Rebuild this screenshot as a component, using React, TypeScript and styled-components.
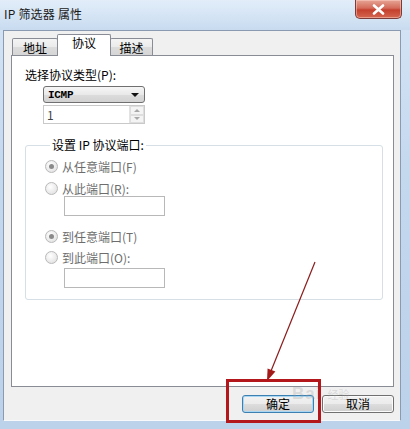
import React from "react";
import styled, { createGlobalStyle, css } from "styled-components";

const GlobalStyle = createGlobalStyle`
  html, body { margin: 0; padding: 0; background: #ffffff; }
  * { box-sizing: border-box; }
`;

const FONT = `"Noto Sans CJK SC", "Liberation Sans", sans-serif`;

const Window = styled.div`
  position: relative;
  width: 410px;
  height: 429px;
  display: flex;
  flex-direction: column;
  overflow: hidden;
  background: linear-gradient(to bottom, #d6e5f6 0%, #c4d8ee 40%, #bcd2ea 100%);
  font-family: ${FONT};
  font-size: 12px;
  color: #000;
`;

const TitleBar = styled.div`
  height: 30px;
  flex: none;
  display: flex;
  justify-content: space-between;
  align-items: flex-start;
  padding-left: 4px;
  padding-right: 8px;
  background: linear-gradient(to bottom, #e2edf9 0%, #d3e3f4 60%, #c8dbef 100%);
`;

const Title = styled.span`
  line-height: 28px;
  font-size: 12px;
  color: #1a1a1a;
  letter-spacing: 0.2px;
`;

const CloseBtn = styled.div`
  width: 47px;
  height: 19px;
  border: 1px solid #7c3b3b;
  border-top: none;
  border-radius: 0 0 5px 5px;
  background: linear-gradient(to bottom, #e6a596 0%, #d46b5a 45%, #c4402f 55%, #d4664f 100%);
  display: flex;
  align-items: center;
  justify-content: center;
  box-shadow: inset 0 0 0 1px rgba(255, 210, 200, 0.5);
`;

const Frame = styled.div`
  flex: 1;
  display: flex;
  padding: 0 9px 8px 3px;
`;

const Client = styled.div`
  flex: 1;
  display: flex;
  flex-direction: column;
  background: #f0f0f0;
  border: 1px solid #8a9bb1;
  border-bottom-color: #f7f9fb;
  padding: 3px 6px 7px 7px;
`;

const TabRow = styled.div`
  height: 21px;
  display: flex;
  align-items: flex-end;
  padding-left: 1px;
  position: relative;
  z-index: 1;
`;

const Tab = styled.div<{ $w: number; $active?: boolean }>`
  width: ${(p) => p.$w}px;
  height: 17px;
  border: 1px solid #898c95;
  border-bottom: none;
  border-radius: 2px 2px 0 0;
  background: linear-gradient(to bottom, #f4f4f4 0%, #ebebeb 50%, #dcdcdc 51%, #d6d6d6 100%);
  display: flex;
  align-items: center;
  justify-content: center;
  font-size: 12px;
  line-height: 14px;
  padding-top: 1px;
  ${(p) =>
    p.$active &&
    css`
      height: 22px;
      margin: 0 -1px -1px -1px;
      background: #ffffff;
      padding-top: 0;
      padding-bottom: 5px;
      position: relative;
    `}
`;

const Panel = styled.div`
  height: 332px;
  flex: none;
  background: #ffffff;
  border: 1px solid #898c95;
  padding: 12px 10px 0 13px;
  display: flex;
  flex-direction: column;
`;

const Label = styled.div`
  line-height: 14px;
  height: 14px;
  font-size: 12px;
  white-space: nowrap;
`;

const Indented = styled.div`
  margin-left: 18px;
  display: flex;
  flex-direction: column;
  align-items: flex-start;
`;

const Select = styled.div`
  margin-top: 4px;
  width: 102px;
  height: 17px;
  border: 1px solid #707070;
  border-radius: 3px;
  background: linear-gradient(to bottom, #f6f6f6 0%, #e9e9e9 50%, #dcdcdc 51%, #d2d2d2 100%);
  display: flex;
  align-items: center;
  justify-content: space-between;
  padding: 0 4px 0 4px;
  font-family: "Liberation Mono", ${FONT};
  font-size: 11px;
  font-weight: bold;
  letter-spacing: -0.3px;
`;

const Caret = styled.span`
  width: 0;
  height: 0;
  border-left: 4px solid transparent;
  border-right: 4px solid transparent;
  border-top: 4px solid #111;
  margin-right: 1px;
`;

const Spin = styled.div`
  margin-top: 2px;
  width: 102px;
  height: 19px;
  border: 1px solid #c9c9c9;
  background: #fff;
  display: flex;
  align-items: stretch;
`;

const SpinText = styled.div`
  flex: 1;
  padding-left: 3px;
  line-height: 17px;
  font-size: 12px;
  color: #444;
`;

const SpinButtons = styled.div`
  width: 15px;
  display: flex;
  flex-direction: column;
  border-left: 1px solid #e2e2e2;
`;

const SpinBtn = styled.div<{ $down?: boolean }>`
  flex: 1;
  display: flex;
  align-items: center;
  justify-content: center;
  background: #f4f4f4;
  border: 1px solid #dedede;
  &::after {
    content: "";
    border-left: 3px solid transparent;
    border-right: 3px solid transparent;
    ${(p) =>
      p.$down
        ? css`border-top: 3px solid #a8a8a8;`
        : css`border-bottom: 3px solid #a8a8a8;`}
  }
`;

const Group = styled.fieldset`
  margin: 14px 0 0 0;
  border: 1px solid #d5dfe5;
  border-radius: 3px;
  box-shadow: inset 1px 1px 0 #ffffff;
  padding: 7px 10px 11px 19px;
  display: flex;
  flex-direction: column;
  align-items: flex-start;
`;

const Legend = styled.legend`
  margin-left: 5px;
  padding: 0 2px;
  line-height: 14px;
  font-size: 12px;
`;

const RadioRow = styled.div<{ $gap: number }>`
  margin-top: ${(p) => p.$gap}px;
  height: 12px;
  display: flex;
  align-items: center;
  gap: 4px;
  color: #6d6d6d;
  font-size: 12px;
  white-space: nowrap;
`;

const Radio = styled.span<{ $checked?: boolean }>`
  width: 13px;
  height: 13px;
  flex: none;
  border-radius: 50%;
  border: 1px solid #b9b9b9;
  background: radial-gradient(circle at 40% 35%, #ffffff 0%, #e6e6e6 70%, #d8d8d8 100%);
  display: flex;
  align-items: center;
  justify-content: center;
  &::after {
    content: "";
    width: 5px;
    height: 5px;
    border-radius: 50%;
    background: ${(p) => (p.$checked ? "#8a8a8a" : "transparent")};
  }
`;

const TextBox = styled.div<{ $gap: number }>`
  margin-top: ${(p) => p.$gap}px;
  margin-left: 19px;
  width: 101px;
  height: 20px;
  border: 1px solid #b8b8b8;
  background: #ffffff;
`;

const ButtonBar = styled.div`
  margin-top: 8px;
  display: flex;
  justify-content: flex-end;
  gap: 8px;
`;

const Button = styled.div<{ $default?: boolean }>`
  width: 72px;
  height: 18px;
  border: 1px solid ${(p) => (p.$default ? "#3c7fb1" : "#707070")};
  border-radius: 3px;
  background: linear-gradient(to bottom, #f2f2f2 0%, #ebebeb 50%, #dddddd 51%, #cfcfcf 100%);
  box-shadow: inset 0 0 0 1px ${(p) => (p.$default ? "#a9d7f3" : "#fbfbfb")};
  display: flex;
  align-items: center;
  justify-content: center;
  font-size: 12px;
  line-height: 14px;
`;

const Overlay = styled.svg`
  position: absolute;
  left: 0;
  top: 0;
  pointer-events: none;
`;

const Watermark = styled.div`
  position: absolute;
  left: 292px;
  top: 384px;
  display: flex;
  align-items: baseline;
  gap: 6px;
  color: rgba(160, 160, 160, 0.3);
  font-family: "Liberation Sans", ${FONT};
  pointer-events: none;
`;

const WmBig = styled.span`
  font-size: 17px;
  font-weight: bold;
  letter-spacing: 1px;
`;

const WmSmall = styled.span`
  font-size: 11px;
`;

export default function App() {
  return (
    <>
      <GlobalStyle />
      <Window>
        <TitleBar>
          <Title>IP 筛选器 属性</Title>
          <CloseBtn>
            <svg width="13" height="11" viewBox="0 0 13 11">
              <path
                d="M2 1.5 L11 9.5 M11 1.5 L2 9.5"
                stroke="#ffffff"
                strokeWidth="2.6"
                strokeLinecap="round"
              />
            </svg>
          </CloseBtn>
        </TitleBar>
        <Frame>
          <Client>
            <TabRow>
              <Tab $w={46}>地址</Tab>
              <Tab $w={54} $active>
                协议
              </Tab>
              <Tab $w={43}>描述</Tab>
            </TabRow>
            <Panel>
              <Label>选择协议类型(P):</Label>
              <Indented>
                <Select>
                  <span>ICMP</span>
                  <Caret />
                </Select>
                <Spin>
                  <SpinText>1</SpinText>
                  <SpinButtons>
                    <SpinBtn />
                    <SpinBtn $down />
                  </SpinButtons>
                </Spin>
              </Indented>
              <Group>
                <Legend>设置 IP 协议端口:</Legend>
                <RadioRow $gap={1}>
                  <Radio $checked />
                  从任意端口(F)
                </RadioRow>
                <RadioRow $gap={10}>
                  <Radio />
                  从此端口(R):
                </RadioRow>
                <TextBox $gap={2} />
                <RadioRow $gap={14}>
                  <Radio $checked />
                  到任意端口(T)
                </RadioRow>
                <RadioRow $gap={9}>
                  <Radio />
                  到此端口(O):
                </RadioRow>
                <TextBox $gap={5} />
              </Group>
            </Panel>
            <ButtonBar>
              <Button $default>确定</Button>
              <Button>取消</Button>
            </ButtonBar>
          </Client>
        </Frame>
        <Watermark>
          <WmBig>Bai</WmBig>
          <WmSmall>经验</WmSmall>
        </Watermark>
        <Overlay width="410" height="429" viewBox="0 0 410 429">
          <line x1="315" y1="262" x2="271" y2="371" stroke="#8b1c1c" strokeWidth="1.2" />
          <polygon points="275.4,371.6 267.6,368.4 267,381" fill="#a31a1a" />
          <rect x="227.5" y="380.5" width="92" height="41" fill="none" stroke="#b3161b" strokeWidth="3" />
        </Overlay>
      </Window>
    </>
  );
}
